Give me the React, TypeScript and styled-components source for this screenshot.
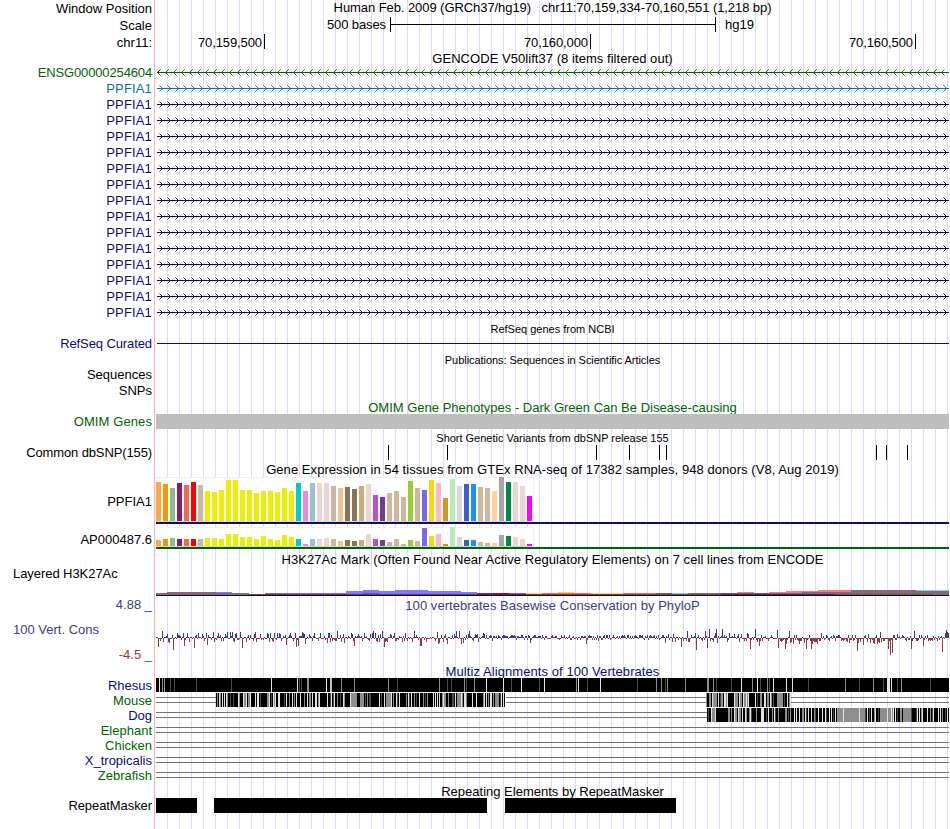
import React from 'react';
import styled, { createGlobalStyle } from 'styled-components';

const NAVY = '#0c0c78';
const GREEN = '#006400';
const BLUE = '#3c3c8c';
const MAROON = '#8c3c3c';
const PLOT_WIDTH = 793;

const TISSUE_COLORS = [
  '#ffa54f', '#ee9a00', '#8fbc8f', '#8b1c62', '#ee6a50', '#ff0000', '#cdb79e',
  ...Array(13).fill('#eeee00'),
  '#00cdcd', '#ee82ee', '#9ac0cd', '#eed5d2', '#eed5d2', '#cdb79e', '#eec591',
  '#8b7355', '#8b7355', '#cdaa7d', '#eed5d2', '#b452cd', '#7a378b', '#cdb79e', '#cdb79e', '#cdb79e',
  '#9acd32', '#cdb79e', '#7a67ee', '#ffd700', '#ffb6c1', '#cd9b1d', '#b4eeb4', '#d9d9d9',
  '#3a5fcd', '#1e90ff', '#cdb79e', '#cdb79e', '#ffd39b', '#a6a6a6', '#008b45', '#eed5d2', '#eed5d2', '#ff00ff',
];

const PPFIA1_LEVELS = [
  39, 37, 33, 38, 36, 39, 36, 30, 29, 31, 41, 41, 31, 31, 28, 30, 30, 29, 33, 30, 38, 30, 38, 38, 38, 35, 33,
  34, 32, 35, 37, 26, 24, 28, 30, 24, 40, 33, 31, 41, 38, 23, 42, 35, 37, 37, 34, 33, 30, 44, 39, 39, 35, 25,
];

const AP000487_LEVELS = [
  6, 7, 8, 7, 7, 7, 7, 8, 8, 7, 12, 12, 9, 9, 7, 10, 7, 6, 11, 9, 7, 2, 7, 7, 8, 7, 5,
  6, 5, 6, 12, 7, 6, 4, 7, 2, 6, 5, 18, 10, 12, 2, 19, 9, 6, 6, 4, 3, 3, 11, 10, 9, 7, 2,
];

const SNPS = [388, 447, 596, 629, 659, 666, 876, 886, 907];

const REPEATS = [
  [156, 197],
  [214, 487],
  [505, 676],
];

// [x start, x end, top, height, color]
const H3K27AC: [number, number, number, number, string][] = [
  [156, 167, 593, 2, '#7b7380'],
  [167, 216, 592, 3, '#80687f'],
  [216, 232, 592, 1, '#7b7bff'],
  [216, 232, 593, 2, '#80687f'],
  [232, 249, 593, 2, '#777777'],
  [249, 265, 594, 1, '#55505c'],
  [265, 282, 593, 1, '#777777'],
  [265, 346, 594, 1, '#703040'],
  [282, 346, 593, 1, '#7070ff'],
  [346, 363, 591, 3, '#7b7bff'],
  [363, 379, 590, 4, '#7b7bff'],
  [379, 395, 591, 3, '#7b7bff'],
  [395, 428, 590, 4, '#7b7bff'],
  [428, 461, 591, 3, '#7b7bff'],
  [461, 477, 592, 2, '#7b7bff'],
  [346, 363, 594, 1, '#803050'],
  [363, 379, 593, 1, '#6060b0'],
  [363, 477, 594, 1, '#504080'],
  [477, 493, 593, 1, '#5a3a9a'],
  [477, 526, 594, 1, '#801040'],
  [493, 509, 593, 1, '#901030'],
  [509, 526, 593, 1, '#806680'],
  [526, 542, 593, 1, '#ffcc80'],
  [542, 591, 593, 1, '#ff6a55'],
  [558, 574, 592, 1, '#ffc875'],
  [591, 623, 593, 1, '#ffcc80'],
  [623, 656, 593, 1, '#ff6a55'],
  [526, 656, 594, 1, '#804030'],
  [656, 672, 593, 1, '#666055'],
  [672, 688, 593, 1, '#80c8f8'],
  [688, 721, 593, 1, '#806680'],
  [656, 721, 594, 1, '#80502a'],
  [721, 769, 593, 1, '#666070'],
  [737, 754, 592, 1, '#ff7878'],
  [769, 786, 592, 1, '#ff7878'],
  [786, 818, 591, 2, '#ff7878'],
  [769, 818, 593, 2, '#80687f'],
  [802, 818, 592, 2, '#80687f'],
  [818, 851, 590, 2, '#ff7878'],
  [818, 851, 592, 3, '#80687f'],
  [851, 916, 590, 5, '#80687f'],
  [916, 949, 590, 1, '#80d0f0'],
  [916, 949, 591, 4, '#80687f'],
  [721, 835, 594, 1, '#403040'],
  [835, 933, 594, 1, '#80502a'],
];

const CONS_PEAKS: Record<number, number> = {
  158: -9, 162: 7, 163: -4, 169: -5, 173: -12, 177: 5, 184: -8, 187: 5, 189: -4, 194: -10, 198: 5, 207: -7,
  213: 6, 214: -4, 218: 5, 227: 6, 230: 6, 232: 6, 236: 5, 240: 6, 242: -10, 246: -4, 255: 6, 260: 4,
  267: 5, 270: 5, 274: 5, 277: 5, 279: 5, 286: -7, 295: 5, 296: -9, 298: -8, 302: 6, 305: -6, 320: 5,
  327: -5, 337: 7, 344: -5, 351: 5, 354: -8, 358: 4, 373: 7, 377: -4, 379: -4, 382: 7, 384: -9, 390: 4,
  405: 5, 414: 7, 420: -8, 421: -8, 437: 6, 438: -6, 439: -5, 445: 4, 447: -6, 456: 7, 459: 7, 461: -6,
  463: -5, 469: 7, 477: 4, 478: -4, 483: 5, 492: -3, 530: -5, 586: -6, 598: -3,
  665: -5, 668: 4, 681: -9, 687: 7, 696: -12, 705: 7, 707: -10, 709: 9, 713: -4, 716: 9, 717: -5, 722: 9,
  734: 4, 750: -11, 755: 9, 759: -8, 777: 8, 778: -10, 785: -11, 789: 7, 793: -6, 806: -11, 811: -11,
  816: -4, 821: 5, 857: -13, 863: -7, 868: 4, 873: -5, 880: 6, 888: -11, 890: -17, 892: -15, 897: 4,
  911: -11, 914: 7, 923: -8, 942: -14, 945: 5, 946: 8, 947: 6, 948: 5,
};

const RHESUS_MARKS: [number, number, string][] = [
  [159, 1, '.'], [162, 1, 'o'], [164, 1, 'o'], [170, 1, ':'], [174, 1, ':'], [196, 1, ':'], [231, 1, ':'],
  [271, 1, '.'], [297, 1, '.'], [299, 1, ':'], [301, 1, ':'], [307, 2, 'o'], [326, 1, '.'], [330, 2, 'w'],
  [341, 1, 'o'], [354, 1, 'o'], [388, 1, 'o'], [397, 1, ':'], [439, 1, 'o'], [447, 1, ':'], [451, 1, ':'],
  [464, 1, 'o'], [466, 1, ':'], [474, 1, 'o'], [486, 1, '.'], [503, 1, '.'], [511, 1, ':'], [521, 1, '.'],
  [539, 1, ':'], [544, 1, '.'], [576, 1, 'o'], [578, 1, '.'], [587, 1, ':'], [600, 1, '.'], [637, 1, ':'],
  [656, 1, 'o'], [661, 1, 'o'], [665, 1, ':'], [667, 1, 'o'], [685, 1, 'o'], [707, 2, 'o'], [713, 1, 'o'],
  [716, 1, ':'], [731, 1, ':'], [741, 1, '.'], [752, 1, 'o'], [757, 1, '.'], [760, 1, ':'], [767, 1, 'o'],
  [769, 1, ':'], [773, 1, '.'], [786, 1, '.'], [792, 1, '.'], [808, 1, ':'], [845, 1, 'o'], [859, 1, ':'],
  [873, 1, 'o'], [883, 1, ':'], [887, 3, '.'], [891, 1, '.'], [897, 1, ':'], [901, 1, 'o'], [930, 1, ':'],
];

const SHADES: Record<string, string> = {
  '#': '#000000',
  ':': '#4a4a4a',
  o: '#8e8e8e',
  '.': '#e2e2e2',
  w: '#c0c0c0',
};

const MOUSE_LEFT =
  '#o#.o#.#.#.o##:##:####.o###.oo.#oo.####.#..#:######oo.#:#.o.##..####:#.##o##.#o#.###.###o##.#' +
  'oo#.##..#o.#######.##:.#:.##o##:##.o#####.oooooo###oooo#:#o#::########.#:##.#ooooo.#o##.:#.#' +
  '#####o#.:#.##o#:##.#' +
  '##o#:#o#####.#.#.#.##o.oo##o###::#.#oooo.o#..o#####.###.######o.#.#o#..#o#oooo#:.#.#:#.##.#####';

const MOUSE_RIGHT =
  'o##oo#.oooo#.#:oo#..o.######.ooo#.oo#.oo.o.######.#:##oo##..#oo#.o#:###oooooo#:##.#o.';

const DOG =
  '#:##.ooo.############oo#o##.oo#.oo#.##.o##o.:####o####...##:#.###o#.:##o######oo#:#o###' +
  '.#.##.##oo#.:#.##.##o:##.###.##.:##.#.#:#.#oooooo.ooooooooooooooo.ooooo:#.#:#.##o.##:#' +
  'ooooooo.ooo.o.#.#:##oo#oooooooo:####:.#.#o.####.##o#:.####.#.#o##:#.#';

const noise = (n: number) => {
  const v = Math.sin(n * 12.9898 + 4.137) * 43758.5453;
  return v - Math.floor(v);
};

const consValue = (x: number) => {
  if (CONS_PEAKS[x] !== undefined) return CONS_PEAKS[x];
  const r = noise(x);
  const s = noise(x + 5000);
  if ((x > 775 && x < 818) || (x > 845 && x < 893)) {
    return r < 0.85 ? -1 - Math.floor(s * s * 6) : 1 + Math.floor(s * 3);
  }
  if (x > 485 && x < 665) return r < 0.68 ? 1 + Math.floor(s * 3) : -1 - Math.floor(s * 1.6);
  if (x > 818) return r < 0.45 ? 1 + Math.floor(s * 3) : -1 - Math.floor(s * 3);
  return r < 0.55 ? 1 + Math.floor(s * s * 5) : -1 - Math.floor(s * s * 4);
};

const range = (n: number) => Array.from({ length: n }, (_, i) => i);

interface PlotProps {
  height: number;
  top?: number;
  children: React.ReactNode;
}

const Plot = ({ height, top = 0, children }: PlotProps) => (
  <PlotSvg
    width={PLOT_WIDTH}
    height={height}
    viewBox={`156 ${top} ${PLOT_WIDTH} ${height}`}
    shapeRendering="crispEdges"
  >
    {children}
  </PlotSvg>
);

interface GeneProps {
  name: string;
  color: string;
  reverse?: boolean;
  spacing?: number;
}

const Gene = ({ name, color, reverse, spacing = 0.15 }: GeneProps) => (
  <Track $height={16}>
    <Label $color={color} $spacing={spacing}>{name}</Label>
    <Plot height={16}>
      <rect x={157} y={7} width={792} height={1} fill={color} />
      {range(99).map((i) => {
        const x = (reverse ? 157 : 159) + i * 8;
        return range(4).map((k) => {
          const dx = reverse ? k : 3 - k;
          return (
            <g key={`${i}-${k}`} fill={color} opacity={k === 3 ? 0.45 : 0.9}>
              <rect x={x + dx} y={7 - k} width={1} height={1} />
              <rect x={x + dx} y={7 + k} width={1} height={1} />
            </g>
          );
        });
      })}
    </Plot>
  </Track>
);

interface ExpressionProps {
  name: string;
  levels: number[];
  barHeight: number;
  height: number;
  labelTop: number;
  color: string;
}

const Expression = ({ name, levels, barHeight, height, labelTop, color }: ExpressionProps) => (
  <Track $height={height}>
    <Label $top={labelTop}>{name}</Label>
    <Plot height={barHeight + 3}>
      <rect x={156} y={0} width={378} height={barHeight + 1} fill="#f0f0f0" />
      <rect x={156} y={1} width={377} height={barHeight} fill="#ffffff" />
      <rect x={156} y={barHeight} width={377} height={1} fill="#d3d3d3" />
      {levels.map((level, i) => (
        <rect
          key={i}
          x={156 + i * 7}
          y={barHeight - level}
          width={5}
          height={level}
          fill={TISSUE_COLORS[i]}
        />
      ))}
      <rect x={156} y={barHeight + 1} width={PLOT_WIDTH} height={2} fill={color} />
    </Plot>
  </Track>
);

const Stripes = ({ start, code }: { start: number; code: string }) => (
  <>
    {code.split('').map((c, i) => (
      <rect key={i} x={start + i} y={0} width={1} height={14} fill={SHADES[c]} />
    ))}
  </>
);

const Gap = ({ from = 156, to = 949 }: { from?: number; to?: number }) => (
  <>
    <rect x={from} y={4} width={to - from} height={1} fill="#737373" />
    <rect x={from} y={9} width={to - from} height={1} fill="#737373" />
  </>
);

interface SpeciesProps {
  name: string;
  color: string;
  children?: React.ReactNode;
}

const Species = ({ name, color, children }: SpeciesProps) => (
  <Track $height={15}>
    <Label $color={color}>{name}</Label>
    <Plot height={15}>{children || <Gap />}</Plot>
  </Track>
);

interface HeadingProps {
  height: number;
  top?: number;
  color?: string;
  small?: boolean;
  spacing?: number;
  children: React.ReactNode;
}

const Heading = ({ height, top, color, small, spacing, children }: HeadingProps) => (
  <Track $height={height}>
    <Label />
    <Title $top={top} $color={color} $small={small} $spacing={spacing}>
      {children}
    </Title>
  </Track>
);

const App = () => {
  return (
    <Browser>
      <GlobalStyle />
      <Track $height={17}>
        <Label $top={1}>Window Position</Label>
        <Title $spacing={-0.07}>
          Human Feb. 2009 (GRCh37/hg19)&nbsp;&nbsp; chr11:70,159,334-70,160,551 (1,218 bp)
        </Title>
      </Track>
      <Track $height={17}>
        <Label $top={1}>Scale</Label>
        <ScaleText>500 bases</ScaleText>
        <ScaleBar />
        <Assembly>hg19</Assembly>
      </Track>
      <Track $height={17}>
        <Label $top={1}>chr11:</Label>
        <Position $width={109}>70,159,500</Position>
        <Position $width={326}>70,160,000</Position>
        <Position $width={325}>70,160,500</Position>
      </Track>

      <Heading height={14} spacing={0.05}>GENCODE V50lift37 (8 items filtered out)</Heading>
      <Gene name="ENSG00000254604" color={GREEN} spacing={-0.14} reverse />
      <Gene name="PPFIA1" color="#0c6eaf" />
      {range(14).map((i) => (
        <Gene key={i} name="PPFIA1" color={NAVY} />
      ))}

      <Heading height={15} top={1} small>RefSeq genes from NCBI</Heading>
      <Track $height={16}>
        <Label $color={NAVY} $spacing={-0.1}>RefSeq Curated</Label>
        <Plot height={16}>
          <rect x={157} y={7} width={792} height={1} fill={NAVY} />
        </Plot>
      </Track>

      <Heading height={15} top={1} spacing={-0.05} small>
        Publications: Sequences in Scientific Articles
      </Heading>
      <Track $height={16}>
        <Label>Sequences</Label>
      </Track>
      <Track $height={16}>
        <Label>SNPs</Label>
      </Track>

      <Heading height={15} top={1} color={GREEN}>
        OMIM Gene Phenotypes - Dark Green Can Be Disease-causing
      </Heading>
      <Track $height={16}>
        <Label $color={GREEN} $spacing={0.1}>OMIM Genes</Label>
        <OmimBar />
      </Track>

      <Heading height={15} top={1} spacing={-0.02} small>
        Short Genetic Variants from dbSNP release 155
      </Heading>
      <Track $height={16}>
        <Label $spacing={-0.12}>Common dbSNP(155)</Label>
        <Plot height={16}>
          {SNPS.map((x) => (
            <rect key={x} x={x} y={0} width={1} height={15} />
          ))}
        </Plot>
      </Track>

      <Heading height={16} top={1} spacing={0.06}>
        Gene Expression in 54 tissues from GTEx RNA-seq of 17382 samples, 948 donors (V8, Aug 2019)
      </Heading>
      <Expression
        name="PPFIA1"
        levels={PPFIA1_LEVELS}
        barHeight={44}
        height={50}
        labelTop={17}
        color={NAVY}
      />
      <Expression
        name="AP000487.6"
        levels={AP000487_LEVELS}
        barHeight={19}
        height={24}
        labelTop={5}
        color={GREEN}
      />

      <Heading height={15} top={1} spacing={0.05}>
        H3K27Ac Mark (Often Found Near Active Regulatory Elements) on 7 cell lines from ENCODE
      </Heading>
      <Track $height={31}>
        <Label $left $spacing={-0.06}>Layered H3K27Ac</Label>
        <Plot height={31} top={566}>
          {H3K27AC.map(([from, to, y, h, fill], i) => (
            <rect key={i} x={from} y={y} width={to - from} height={h} fill={fill} />
          ))}
          <rect x={156} y={595} width={PLOT_WIDTH} height={1} fill="#1c0820" />
        </Plot>
      </Track>

      <Track $height={17}>
        <Label $color={BLUE}>4.88 _</Label>
        <Title $top={1} $color={BLUE} $spacing={0.05}>100 vertebrates Basewise Conservation by PhyloP</Title>
      </Track>
      <Track $height={50}>
        <ConsLabels>
          <Label $left $top={8} $color={BLUE}>100 Vert. Cons</Label>
          <Label $top={10} $color={MAROON}>-4.5 _</Label>
        </ConsLabels>
        <Plot height={50}>
          {range(PLOT_WIDTH).map((i) => {
            const x = 156 + i;
            const v = consValue(x);
            return (
              <rect
                key={x}
                x={x}
                y={v > 0 ? 24 - v : 24}
                width={1}
                height={Math.abs(v)}
                fill={v > 0 ? BLUE : MAROON}
              />
            );
          })}
        </Plot>
      </Track>

      <Heading height={14} color={NAVY} spacing={0.08}>Multiz Alignments of 100 Vertebrates</Heading>
      <Species name="Rhesus" color={NAVY}>
        <rect x={156} y={0} width={PLOT_WIDTH} height={14} />
        {RHESUS_MARKS.map(([x, w, c]) => (
          <rect key={x} x={x} y={0} width={w} height={14} fill={SHADES[c]} />
        ))}
      </Species>
      <Species name="Mouse" color={GREEN}>
        <Gap to={216} />
        <Stripes start={216} code={MOUSE_LEFT.slice(0, 289)} />
        <Gap from={506} to={706} />
        <Stripes start={706} code={MOUSE_RIGHT} />
        <Gap from={791} />
      </Species>
      <Species name="Dog" color={NAVY}>
        <Gap to={707} />
        <Stripes start={707} code={DOG} />
      </Species>
      <Species name="Elephant" color={GREEN} />
      <Species name="Chicken" color={GREEN} />
      <Species name="X_tropicalis" color={NAVY} />
      <Species name="Zebrafish" color={GREEN} />

      <Heading height={15} top={1}>Repeating Elements by RepeatMasker</Heading>
      <Track $height={31}>
        <Label $spacing={-0.08}>RepeatMasker</Label>
        <Plot height={31}>
          {REPEATS.map(([from, to]) => (
            <rect key={from} x={from} y={0} width={to - from} height={15} />
          ))}
        </Plot>
      </Track>
    </Browser>
  );
};

const GlobalStyle = createGlobalStyle`
  body {
    margin: 0;
    background: #fff;
  }
`;

const Browser = styled.div`
  width: 949px;
  height: 829px;
  overflow: hidden;
  font-family: 'Liberation Sans', Arial, sans-serif;
  font-size: 13px;
  line-height: 15px;
  color: #000;
  white-space: nowrap;
  background-image: linear-gradient(#ffb4b4, #ffb4b4), linear-gradient(#fff, #fff),
    linear-gradient(to right, #dcdcf8 1px, transparent 1px);
  background-size: 1px 100%, 156px 100%, 12px 100%;
  background-position: 154px 0, 0 0, 11px 0;
  background-repeat: no-repeat, no-repeat, repeat;
`;

const Track = styled.div<{ $height: number }>`
  display: flex;
  align-items: flex-start;
  height: ${(p) => p.$height}px;
`;

const Label = styled.div<{ $top?: number; $left?: boolean; $color?: string; $spacing?: number }>`
  box-sizing: border-box;
  flex: none;
  width: 156px;
  padding: ${(p) => p.$top || 0}px 4px 0 13px;
  display: flex;
  justify-content: ${(p) => (p.$left ? 'flex-start' : 'flex-end')};
  letter-spacing: ${(p) => p.$spacing || 0}px;
  color: ${(p) => p.$color || '#000'};
`;

const ConsLabels = styled.div`
  display: flex;
  flex-direction: column;
`;

const Title = styled.div<{ $top?: number; $color?: string; $small?: boolean; $spacing?: number }>`
  flex: 1;
  padding-top: ${(p) => p.$top || 0}px;
  text-align: center;
  font-size: ${(p) => (p.$small ? 11 : 13)}px;
  letter-spacing: ${(p) => p.$spacing || 0}px;
  color: ${(p) => p.$color || '#000'};
`;

const PlotSvg = styled.svg`
  display: block;
  flex: none;
`;

const ScaleText = styled.div`
  width: 230px;
  text-align: right;
  letter-spacing: -0.1px;
`;

const ScaleBar = styled.div`
  box-sizing: border-box;
  width: 326px;
  height: 15px;
  margin: 0 9px 0 4px;
  border: solid #000;
  border-width: 0 1px;
  background: linear-gradient(#000, #000) 0 7px / 100% 1px no-repeat;
`;

const Assembly = styled.div`
  flex: 1;
`;

const Position = styled.div<{ $width: number }>`
  box-sizing: border-box;
  width: ${(p) => p.$width}px;
  height: 15px;
  padding: 1px 2px 0 0;
  border-right: 1px solid #000;
  text-align: right;
  letter-spacing: -0.1px;
`;

const OmimBar = styled.div`
  flex: 1;
  height: 15px;
  background: #bebebe;
`;

export default App;
